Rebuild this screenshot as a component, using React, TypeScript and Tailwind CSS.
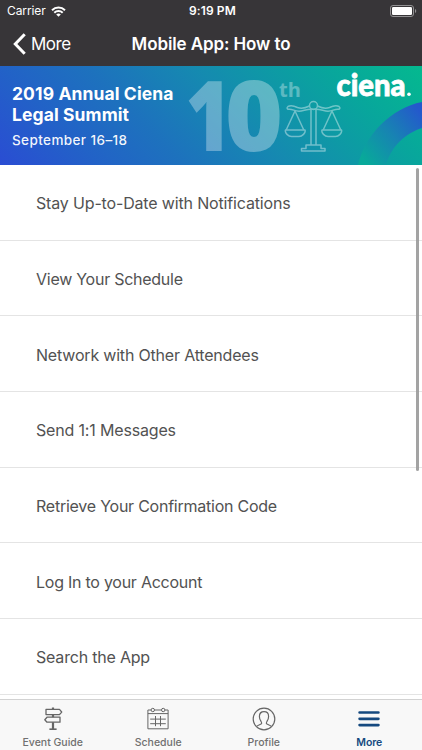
import type { ReactNode } from "react";

type Tab = {
    label: string;
    icon: ReactNode;
    active?: boolean;
};

const topics = [
    { title: "Stay Up-to-Date with Notifications", className: "tracking-[-0.16px]" },
    { title: "View Your Schedule", className: "tracking-[-0.26px]" },
    { title: "Network with Other Attendees", className: "tracking-[-0.19px]" },
    { title: "Send 1:1 Messages", className: "tracking-[-0.17px]" },
    { title: "Retrieve Your Confirmation Code", className: "tracking-[-0.24px]" },
    { title: "Log In to your Account", className: "tracking-[-0.25px]" },
    { title: "Search the App", className: "tracking-[-0.2px]" },
];

const SignpostIcon = () => (
    <svg width="22" height="24" viewBox="0 0 22 24" fill="none" stroke="#666" strokeWidth="1.3" strokeLinejoin="round">
        <path d="M4 2.400h13.500l2.200 2.600-2.200 2.600H4z" />
        <path d="M18 10.200H5l-2.200 2.500L5 15.200h13z" />
        <path d="M11 .4v2M11 7.600v2.600M11 15.200v7" strokeWidth="2.200" />
        <path d="M7.400 22.200h7.200" strokeWidth="1.600" />
    </svg>
);

const CalendarIcon = () => (
    <svg width="22" height="24" viewBox="0 0 22 24" fill="none" stroke="#666" strokeWidth="1">
        <path d="M4 3H.9v18.800h20.200V3H18M7.600 3h6.800M.9 6.600h20.200" />
        <circle cx="5.800" cy="3" r="1.700" />
        <circle cx="16.200" cy="3" r="1.700" />
        <path d="M3.200 12.100h15.600M3.200 16.700h15.600M8.500 9v10.200M13.500 9v10.200" />
    </svg>
);

const ProfileIcon = () => (
    <svg width="24" height="24" viewBox="0 0 24 24" fill="none" stroke="#666" strokeWidth="1.200">
        <circle cx="12" cy="12" r="10.800" />
        <path d="M4.600 19.400c1.200-1.200 3.400-1.700 4.500-2.400.8-.6.6-1.700 0-2.500-1-1.200-1.700-2.900-1.700-5C7.400 6.600 9.200 4.700 12 4.700s4.600 1.900 4.600 4.800c0 2.100-.7 3.800-1.700 5-.6.8-.8 1.900 0 2.500 1.100.7 3.300 1.200 4.500 2.400" />
    </svg>
);

const MenuIcon = () => (
    <svg width="22" height="24" viewBox="0 0 22 24" stroke="#15497f" strokeWidth="2.700" strokeLinecap="round">
        <path d="M1.600 5.500h18.800M1.600 11.800h18.800M1.600 18.100h18.800" />
    </svg>
);

const tabs: Tab[] = [
    { label: "Event Guide", icon: <SignpostIcon /> },
    { label: "Schedule", icon: <CalendarIcon /> },
    { label: "Profile", icon: <ProfileIcon /> },
    { label: "More", icon: <MenuIcon />, active: true },
];

const StatusBar = () => (
    <div className="grid h-[22px] grid-cols-3 items-center text-white">
        <div className="flex items-center gap-[5px] pl-[7px]">
            <span className="text-[12px] leading-none tracking-[-0.1px]">Carrier</span>
            <svg width="15" height="11" viewBox="0 0 15 11" fill="none" stroke="white" strokeWidth="2">
                <path d="M1 4.200a9.400 9.400 0 0 1 13 0M3.300 6.800a6 6 0 0 1 8.400 0" />
                <path d="M7.500 10.700 5.200 8.500a3.300 3.300 0 0 1 4.600 0z" fill="white" stroke="none" />
            </svg>
        </div>
        <span className="pl-[3px] text-center text-[12px] leading-none font-semibold tracking-[0.1px]">9:19 PM</span>
        <svg className="mr-[5px] justify-self-end" width="27" height="12" viewBox="0 0 27 12">
            <rect x="0.500" y="0.500" width="23" height="11" rx="2.500" fill="none" stroke="#929193" />
            <rect x="2" y="2" width="20" height="8" rx="1.200" fill="white" />
            <path d="M25 4c1.700.6 1.700 3.400 0 4z" fill="#929193" />
        </svg>
    </div>
);

const NavBar = () => (
    <div className="grid h-11 grid-cols-[1fr_auto_1fr] items-center text-white">
        <button className="flex items-center gap-[5px] pl-[13px]">
            <svg width="13" height="22" viewBox="0 0 13 22" fill="none" stroke="white" strokeWidth="3">
                <path d="M11.700 1.300 2.300 11l9.400 9.700" />
            </svg>
            <span className="text-[17px] leading-none tracking-[-0.5px]">More</span>
        </button>
        <h1 className="text-[17px] leading-none font-semibold tracking-[-0.1px]">Mobile App: How to</h1>
    </div>
);

const Banner = () => (
    <div className="relative h-[99px] shrink-0 overflow-hidden bg-[linear-gradient(45deg,#2a4dd3_0%,#2262c7_19%,#1d72bd_36%,#158ab0_56%,#08a69c_81%,#04b98f_100%)]">
        {/* artwork behind the title */}
        <svg className="absolute inset-0" width="422" height="99" viewBox="0 0 422 99">
            <defs>
                <linearGradient id="ring" gradientUnits="userSpaceOnUse" x1="365" y1="95" x2="422" y2="48">
                    <stop offset="0" stopColor="#08a99a" />
                    <stop offset="0.500" stopColor="#1784b2" />
                    <stop offset="1" stopColor="#2459cc" />
                </linearGradient>
            </defs>
            <path d="M358 99C365 69 391 42 422 36v26c-16 5-31 18-36 37z" fill="url(#ring)" />
            <g fill="white" fontFamily="'Open Sans', sans-serif" fontWeight="800">
                <g fontSize="97" opacity="0.320">
                    <text x="185.500" y="84.500" textLength="46" lengthAdjust="spacingAndGlyphs">1</text>
                    <text x="225" y="84.500" textLength="58" lengthAdjust="spacingAndGlyphs">0</text>
                </g>
                <text x="279" y="31" fontSize="20" fontWeight="700" textLength="22" opacity="0.320">th</text>
                <text x="336.500" y="30" fontFamily="Lato, sans-serif" fontSize="31" fontWeight="900" textLength="69" lengthAdjust="spacingAndGlyphs" stroke="white" strokeWidth="0.800">ciena</text>
                <circle cx="409" cy="28.300" r="1.800" />
            </g>
            <g fill="none" stroke="white" strokeWidth="1.500" strokeLinejoin="round" opacity="0.400">
                <circle cx="313.500" cy="39.500" r="4" />
                <path d="M309.500 40c-4 2-8 3-12 1.500-4-2-7-2.500-9.500-1-1.500 1-1 2.700.5 2.700 4-.5 6 2 10.500 2 4 0 7-2 12-2h5c5 0 8 2 12 2 4.500 0 6.500-2.500 10.500-2 1.500 0 2-1.700.5-2.700-2.500-1.500-5.500-1-9.500 1-4 1.500-8 .5-12-1.500" />
                <path d="M311 43.500V79h5V43.500M306 79h15v3.500h4V85h-23.500v-2.500h4.500z" />
                <path d="M295 45l-8.800 19M295 45l8.800 19M332 45l-8.800 19M332 45l8.800 19" />
                <path d="M285.500 64h19.500c1 3-3 6.500-6 6.500h-7.500c-3 0-7-3.500-6-6.500zM322 64h19.500c1 3-3 6.500-6 6.500H328c-3 0-7-3.500-6-6.500z" />
            </g>
        </svg>
        <div className="relative pt-[16.5px] pl-3 text-white">
            <h2 className="text-[17.500px] leading-[21px] font-bold tracking-[0.1px]">
                2019 Annual Ciena
                <br />
                Legal Summit
            </h2>
            <p className="mt-[7px] text-[13.500px] leading-4 font-medium tracking-[0.400px] text-white/95">September 16–18</p>
        </div>
    </div>
);

const App = () => {
    return (
        <div className="flex h-[750px] w-[422px] flex-col overflow-hidden bg-white font-['Inter',sans-serif]">
            <header className="h-[66px] shrink-0 bg-[#373538]">
                <StatusBar />
                <NavBar />
            </header>
            <Banner />
            {/* LIST */}
            <main className="relative flex-1 overflow-hidden">
                <ul>
                    {topics.map((topic) => (
                        <li key={topic.title} className="flex h-[75.7px] items-center border-b border-[#e4e4e4] pt-[1.6px] pl-9 text-[16px] text-[#525252]">
                            <span className={topic.className}>{topic.title}</span>
                        </li>
                    ))}
                </ul>
                <div className="absolute top-[3px] right-[3px] h-[303px] w-[3px] rounded-full bg-[#999]/90" />
            </main>
            {/* TABS */}
            <nav className="grid h-[51px] shrink-0 grid-cols-4 border-t border-[#d2d2d2] bg-[#f8f8f8]">
                {tabs.map((tab) => (
                    <button key={tab.label} className="flex flex-col items-center pt-[7px]">
                        {tab.icon}
                        <span
                            className={
                                tab.active
                                    ? "mt-[5px] text-[10.500px] leading-[14px] font-semibold tracking-[-0.1px] text-[#15497f]"
                                    : "mt-[5px] text-[10.500px] leading-[14px] font-medium text-[#707070]"
                            }
                        >
                            {tab.label}
                        </span>
                    </button>
                ))}
            </nav>
        </div>
    );
};
export default App;
